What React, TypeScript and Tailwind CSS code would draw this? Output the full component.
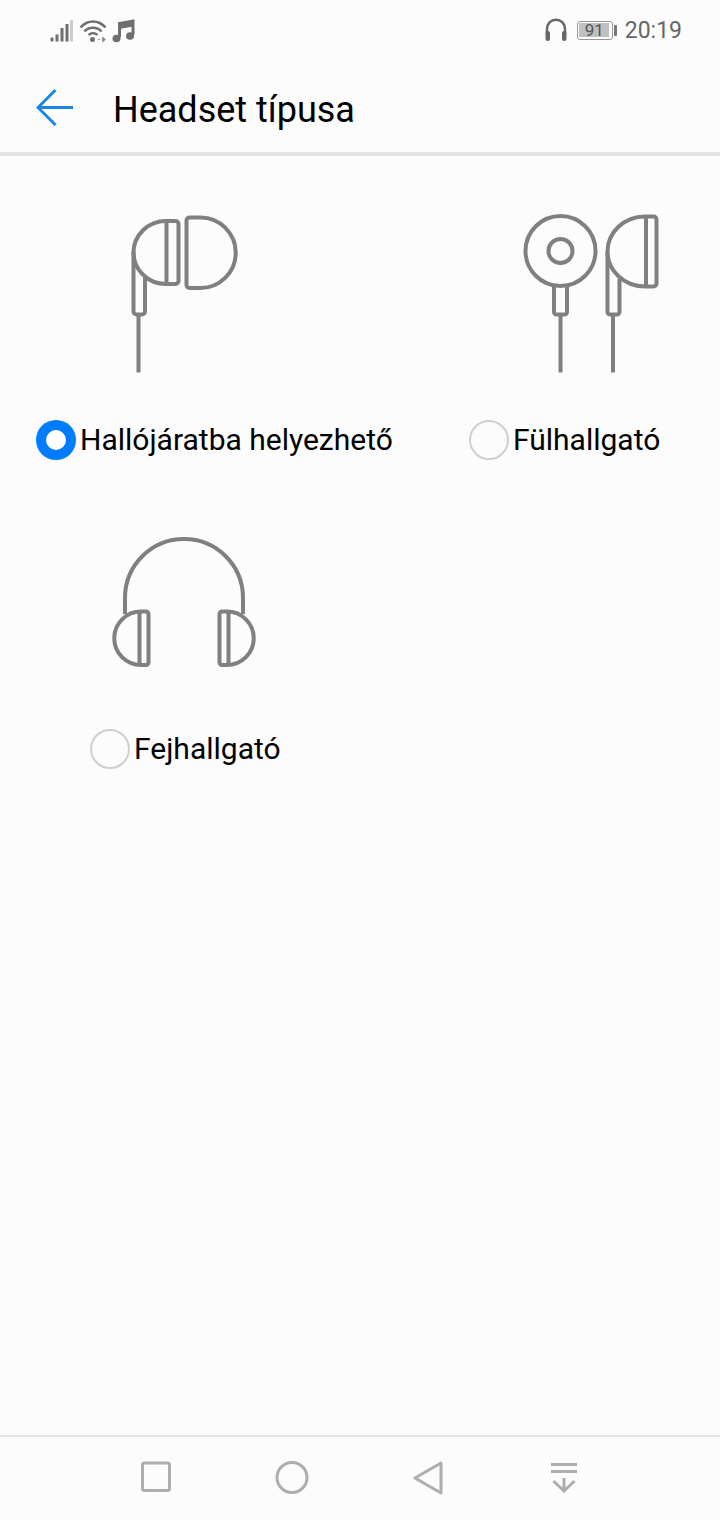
const font = { fontFamily: 'Roboto, "Noto Sans", sans-serif' }

function StatusLeft() {
  return (
    <svg width="90" height="28" viewBox="48 17 90 28" fill="none">
      {/* jelerősség */}
      <rect x="50.5" y="36.500" width="3" height="4" rx="1" fill="#6f6f6f" />
      <rect x="55.5" y="33.500" width="3" height="7" fill="#6f6f6f" />
      <rect x="60.5" y="27" width="3" height="13.5" fill="#6f6f6f" />
      <rect x="65.5" y="23" width="3" height="17.5" fill="#6f6f6f" />
      <rect x="70" y="19" width="3" height="21.5" fill="#ccc" />
      {/* wifi */}
      <path d="M80.5 26.5C87.5 18.5 98.5 18.5 105.5 26.5" stroke="#6f6f6f" strokeWidth="2.600" />
      <path d="M84.5 30.5C89 25.5 97 25.5 101.5 30.5" stroke="#6f6f6f" strokeWidth="2.600" />
      <path d="M88.5 34C91 31.5 95 31.5 97.5 34" stroke="#6f6f6f" strokeWidth="2.400" />
      <circle cx="92.5" cy="38.5" r="2.500" fill="#6f6f6f" />
      <path d="M98 38.5h2M102.5 36v5l3-2.500z" stroke="#999" strokeWidth="1" fill="#888" />
      {/* zene */}
      <path d="M119.500 36V22.500L133 20V34" stroke="#6f6f6f" strokeWidth="3" />
      <path d="M119.500 22.500L133 20V25L119.500 27.500Z" fill="#6f6f6f" stroke="#6f6f6f" />
      <ellipse cx="116.500" cy="37.500" rx="4" ry="3.800" fill="#6f6f6f" />
      <ellipse cx="130" cy="35" rx="4" ry="3.800" fill="#6f6f6f" />
    </svg>
  )
}

function Headset() {
  return (
    <svg width="24" height="24" viewBox="543 18 24 24" fill="none">
      <path d="M546 34V29.500C546 16.500 564 16.500 564 29.500V34" stroke="#666" strokeWidth="2.400" />
      <rect x="544.500" y="31" width="4.500" height="10" rx="2.200" fill="#666" />
      <rect x="561" y="31" width="4.500" height="10" rx="2.200" fill="#666" />
    </svg>
  )
}

function StatusRight() {
  return (
    <div className="flex items-center text-[#666]" style={font}>
      <Headset />
      <div className="ml-[9px] flex items-center">
        <div className="w-[36px] h-[19px] rounded-[3px] border border-[#999] p-[1.5px]">
          <div className="w-[30px] h-full bg-[#c0c0c0] flex items-center justify-center text-[17px] leading-none text-[#555]">
            91
          </div>
        </div>
        <div className="ml-[1px] w-[3px] h-[11px] rounded-[1px] bg-[#777]" />
      </div>
      <span className="ml-[8px] text-[23px] leading-none">20:19</span>
    </div>
  )
}

function InEarIcon() {
  return (
    <svg width="120" height="170" viewBox="125 210 120 170" fill="none" stroke="#808080" strokeWidth="4">
      <path d="M166 221H175.500a3 3 0 0 1 3 3V281a3 3 0 0 1-3 3H166A32.500 31.500 0 0 1 166 221Z" />
      <path d="M166.500 221V284" />
      <path d="M133.500 252V311.500a3 3 0 0 0 3 3H142a3 3 0 0 0 3-3V278" />
      <path d="M138.500 314V372.500" />
      <path d="M189.500 217.500H200.500A35.250 35.250 0 0 1 200.500 288H189.500a3 3 0 0 1-3-3V220.500a3 3 0 0 1 3-3Z" />
    </svg>
  )
}

function EarbudIcon() {
  return (
    <svg width="150" height="170" viewBox="515 210 150 170" fill="none" stroke="#808080" strokeWidth="4">
      <circle cx="560.500" cy="251" r="35" />
      <circle cx="560.500" cy="251" r="12" />
      <path d="M554 286V312a2.500 2.500 0 0 0 2.500 2.500H564.500a2.500 2.500 0 0 0 2.500-2.500V286" />
      <path d="M560.500 314V372.500" />
      <path d="M645 216.500H653.500a3 3 0 0 1 3 3V283.500a3 3 0 0 1-3 3H645A37.500 35 0 0 1 645 216.500Z" />
      <path d="M646 216.500V286.500" />
      <path d="M607.500 252V312a2.500 2.500 0 0 0 2.500 2.500H617a2.500 2.500 0 0 0 2.500-2.500V279" />
      <path d="M613 314V372.500" />
    </svg>
  )
}

function HeadphoneIcon() {
  return (
    <svg width="160" height="145" viewBox="104 530 160 145" fill="none" stroke="#808080" strokeWidth="4">
      <path d="M125 614V598A59 59 0 0 1 243 598V614" />
      <path d="M141 611.500H146a2.500 2.500 0 0 1 2.500 2.500V662.500a2.500 2.500 0 0 1-2.500 2.500H141A26.750 26.750 0 0 1 141 611.500Z" />
      <path d="M139.500 611.500V665" />
      <path d="M227 611.500H222a2.500 2.500 0 0 0-2.500 2.500V662.500a2.500 2.500 0 0 0 2.500 2.500H227A26.750 26.750 0 0 0 227 611.500Z" />
      <path d="M228.500 611.500V665" />
    </svg>
  )
}

function Radio({ checked }: { checked?: boolean }) {
  if (checked) {
    return (
      <div className="w-[40px] h-[40px] rounded-full bg-[#007dff] flex items-center justify-center shrink-0">
        <div className="w-[20px] h-[20px] rounded-full bg-white" />
      </div>
    )
  }
  return <div className="w-[40px] h-[40px] rounded-full border-2 border-[#cfcfcf] shrink-0" />
}

function Option({ label, checked }: { label: string; checked?: boolean }) {
  return (
    <div className="flex items-center gap-[4px] h-[40px]">
      <Radio checked={checked} />
      <span className="text-[30px] leading-none text-black whitespace-nowrap">{label}</span>
    </div>
  )
}

export default function App() {
  return (
    <div className="w-[720px] h-[1520px] bg-[#fcfcfc] flex flex-col" style={font}>
      {/* státuszsor */}
      <div className="h-[60px] flex items-start justify-between pt-[18px] pl-[48px] pr-[38px]">
        <StatusLeft />
        <StatusRight />
      </div>

      {/* fejléc */}
      <div className="h-[96px] border-b-4 border-[#e3e3e3] flex items-center pl-[36px] pt-[2px]">
        <svg width="38" height="38" viewBox="0 0 38 38" fill="none" stroke="#1c86e8" strokeWidth="3">
          <path d="M2 19.500H37" />
          <path d="M19.500 2L2 19.500L19.500 37" />
        </svg>
        <span className="ml-[39px] pt-[6px] text-[36px] leading-none text-black">Headset típusa</span>
      </div>

      {/* lista */}
      <div className="flex-1 pt-[54px]">
        <div className="flex">
          <div className="w-[469px] pl-[36px] flex flex-col">
            <div className="ml-[89px]">
              <InEarIcon />
            </div>
            <div className="mt-[40px]">
              <Option label="Hallójáratba helyezhető" checked />
            </div>
          </div>
          <div className="flex flex-col">
            <div className="ml-[46px]">
              <EarbudIcon />
            </div>
            <div className="mt-[40px]">
              <Option label="Fülhallgató" />
            </div>
          </div>
        </div>
        <div className="mt-[70px] pl-[90px] flex flex-col">
          <div className="ml-[14px]">
            <HeadphoneIcon />
          </div>
          <div className="mt-[54px]">
            <Option label="Fejhallgató" />
          </div>
        </div>
      </div>

      {/* navigáció */}
      <div className="h-[85px] border-t-2 border-[#e3e3e3] flex justify-center items-start pt-[24px]">
        <div className="w-[136px] flex justify-center">
          <svg width="32" height="32" viewBox="0 0 32 32" fill="none" stroke="#aeaeae" strokeWidth="3">
            <rect x="2.500" y="2" width="27" height="27.500" rx="2" />
          </svg>
        </div>
        <div className="w-[136px] flex justify-center">
          <svg width="34" height="34" viewBox="0 0 34 34" fill="none" stroke="#aeaeae" strokeWidth="3">
            <circle cx="17" cy="16.500" r="15" />
          </svg>
        </div>
        <div className="w-[136px] flex justify-center">
          <svg width="34" height="34" viewBox="411 1460 34 34" fill="none" stroke="#aeaeae" strokeWidth="3" strokeLinejoin="round">
            <path d="M415 1477L441 1462V1492Z" />
          </svg>
        </div>
        <div className="w-[136px] flex justify-center">
          <svg width="32" height="32" viewBox="548 1460 32 32" fill="none" stroke="#aeaeae" strokeWidth="3">
            <path d="M551 1463.500H577M551 1470.500H577M564 1477V1490M553.500 1480L564 1490L574.500 1480" />
          </svg>
        </div>
      </div>
    </div>
  )
}
